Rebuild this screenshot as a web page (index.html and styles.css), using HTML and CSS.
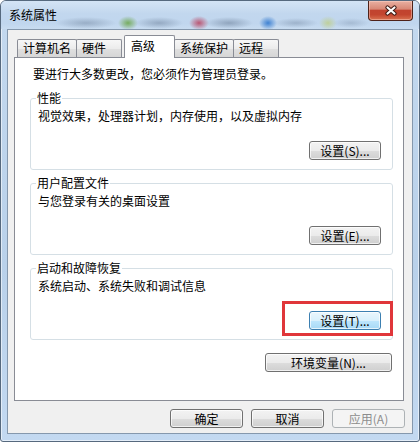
FILE: index.html
```html
<!DOCTYPE html>
<html lang="zh-CN">
<head>
<meta charset="utf-8">
<title>系统属性</title>
<link rel="stylesheet" href="styles.css">
</head>
<body>
<div class="window">
  <div class="titlebar">
    <span class="title">系统属性</span>
    <div class="close">
      <svg width="14" height="11" viewBox="0 0 14 11">
        <path d="M3.5 2.5 L10.5 8.5 M10.5 2.5 L3.5 8.5" stroke="#3b1812" stroke-width="4.2" stroke-linecap="round" fill="none"/>
        <path d="M3.5 2.5 L10.5 8.5 M10.5 2.5 L3.5 8.5" stroke="#ffffff" stroke-width="2.2" stroke-linecap="round" fill="none"/>
      </svg>
    </div>
  </div>
  <div class="client">
    <div class="tabs">
      <div class="tab">计算机名</div>
      <div class="tab">硬件</div>
      <div class="tab sel">高级</div>
      <div class="tab">系统保护</div>
      <div class="tab">远程</div>
    </div>
    <div class="panel">
      <p class="intro">要进行大多数更改，您必须作为管理员登录。</p>
      <fieldset class="group">
        <legend>性能</legend>
        <p class="desc">视觉效果，处理器计划，内存使用，以及虚拟内存</p>
        <div class="actions"><button class="btn">设置(S)...</button></div>
      </fieldset>
      <fieldset class="group">
        <legend>用户配置文件</legend>
        <p class="desc">与您登录有关的桌面设置</p>
        <div class="actions"><button class="btn">设置(E)...</button></div>
      </fieldset>
      <fieldset class="group">
        <legend>启动和故障恢复</legend>
        <p class="desc">系统启动、系统失败和调试信息</p>
        <div class="actions">
          <span class="mark-wrap"><button class="btn hot">设置(T)...</button><span class="mark"></span></span>
        </div>
      </fieldset>
      <div class="env-row"><button class="btn env">环境变量(N)...</button></div>
    </div>
    <div class="footer">
      <button class="btn wide">确定</button>
      <button class="btn wide">取消</button>
      <button class="btn wide" disabled>应用(A)</button>
    </div>
  </div>
</div>
</body>
</html>
```
FILE: styles.css
```css
* { box-sizing: border-box; }
html, body { margin: 0; padding: 0; }
body {
  width: 420px;
  height: 442px;
  overflow: hidden;
  background: #ffffff;
  font-family: "Noto Sans CJK SC", "Noto Sans", sans-serif;
  font-size: 12px;
  color: #000;
}

.window {
  width: 420px;
  height: 442px;
  border: 1px solid #56697e;
  border-radius: 6px 6px 3px 3px;
  background: linear-gradient(#c4d9ef, #b9d1ea 60%, #c3d9f1);
  box-shadow: inset 0 0 0 1px rgba(255, 255, 255, 0.55);
  display: flex;
  flex-direction: column;
  overflow: hidden;
}

.titlebar {
  height: 28px;
  flex: none;
  display: flex;
  justify-content: space-between;
  align-items: flex-start;
  padding-left: 8px;
  background:
    radial-gradient(30px 6px at 85px 22px, rgba(105, 125, 150, 0.45), transparent),
    radial-gradient(10px 7px at 127px 22px, rgba(105, 165, 70, 0.85), transparent),
    radial-gradient(24px 6px at 158px 22px, rgba(105, 125, 150, 0.5), transparent),
    radial-gradient(10px 7px at 198px 22px, rgba(185, 55, 85, 0.8), transparent),
    radial-gradient(24px 6px at 228px 22px, rgba(105, 125, 150, 0.55), transparent),
    radial-gradient(9px 7px at 267px 22px, rgba(40, 115, 205, 0.85), transparent),
    radial-gradient(22px 5px at 295px 22px, rgba(105, 125, 150, 0.4), transparent),
    radial-gradient(9px 7px at 327px 22px, rgba(190, 205, 120, 0.7), transparent),
    radial-gradient(18px 5px at 350px 22px, rgba(105, 125, 150, 0.3), transparent),
    linear-gradient(#d4e4f5, #c2d7ee 45%, #c0d6ee 80%, #c8dcf1);
}

.title {
  margin-top: 6px;
  line-height: 16px;
}

.close {
  width: 45px;
  height: 20px;
  margin-right: 6px;
  border: 1px solid #4e2219;
  border-top: none;
  border-radius: 0 0 4px 4px;
  background: linear-gradient(#e9b0a2 0%, #d88876 42%, #c1432f 50%, #c3452f 72%, #d97251 100%);
  box-shadow: inset 0 0 0 1px rgba(255, 215, 205, 0.45);
  display: flex;
  align-items: center;
  justify-content: center;
}

.client {
  margin-left: 6px;
  width: 406px;
  height: 405px;
  flex: none;
  border: 1px solid #8598ad;
  background: #f0f0f0;
  padding: 5px 8px 0 6px;
}

.tabs {
  display: flex;
  align-items: flex-end;
  height: 23px;
  padding-left: 3px;
  position: relative;
  z-index: 2;
}

.tab {
  height: 18px;
  margin-bottom: 1px;
  min-width: 46px;
  padding: 0 5px;
  border: 1px solid #898c95;
  border-bottom: none;
  border-radius: 2px 2px 0 0;
  background: linear-gradient(#f7f7f7, #ececec 50%, #e0e0e0 51%, #d6d6d6);
  line-height: 16px;
  white-space: nowrap;
}

.tab + .tab { margin-left: -1px; }

.tab.sel {
  height: 23px;
  margin-bottom: 0;
  margin-left: 2px;
  min-width: 51px;
  padding: 2px 6px 0;
  background: #ffffff;
}

.panel {
  height: 344px;
  margin-top: -1px;
  border: 1px solid #898c95;
  background: #ffffff;
  padding: 8px 10px 0 15px;
}

.intro {
  margin: 0 0 0 3px;
  line-height: 16px;
}

.group {
  margin: 8px 0 0;
  padding: 2px 11px 9px 5px;
  border: 1px solid #d5dfe5;
  border-radius: 3px;
  min-width: 0;
}

.group + .group { margin-top: 5px; }

.group legend {
  padding: 0 1px;
  margin: 0;
  line-height: 16px;
}

.desc {
  margin: 0 0 0 2px;
  line-height: 16px;
}

.actions {
  display: flex;
  justify-content: flex-end;
  margin-top: 17px;
}

.btn {
  display: block;
  width: 72px;
  height: 19px;
  padding: 0;
  font: inherit;
  font-size: 12px;
  line-height: 17px;
  color: #000;
  text-align: center;
  white-space: nowrap;
  border: 1px solid #707070;
  border-radius: 3px;
  background: linear-gradient(#f3f3f3 0%, #ebebeb 50%, #dddddd 51%, #cfcfcf 100%);
  box-shadow: inset 0 0 0 1px rgba(255, 255, 255, 0.7);
}

.btn.hot {
  border-color: #3c7fb1;
  background: linear-gradient(#eaf6fd 0%, #d9f0fc 50%, #bee6fd 51%, #a7d9f5 100%);
}

.btn.env { width: 127px; }
.btn.wide { width: 73px; }

.btn:disabled {
  color: #8d8d8d;
  border-color: #adb2b5;
  background: #f4f4f4;
  box-shadow: none;
}

.mark-wrap {
  position: relative;
  display: block;
}

.mark {
  position: absolute;
  left: -27px;
  right: -12px;
  top: -10px;
  bottom: -6px;
  border: 3px solid #e0363a;
  pointer-events: none;
}

.env-row {
  display: flex;
  justify-content: flex-end;
  margin-top: 13px;
  padding-right: 1px;
}

.footer {
  display: flex;
  justify-content: flex-end;
  gap: 8px;
  padding-top: 8px;
  margin-right: -1px;
}
```
